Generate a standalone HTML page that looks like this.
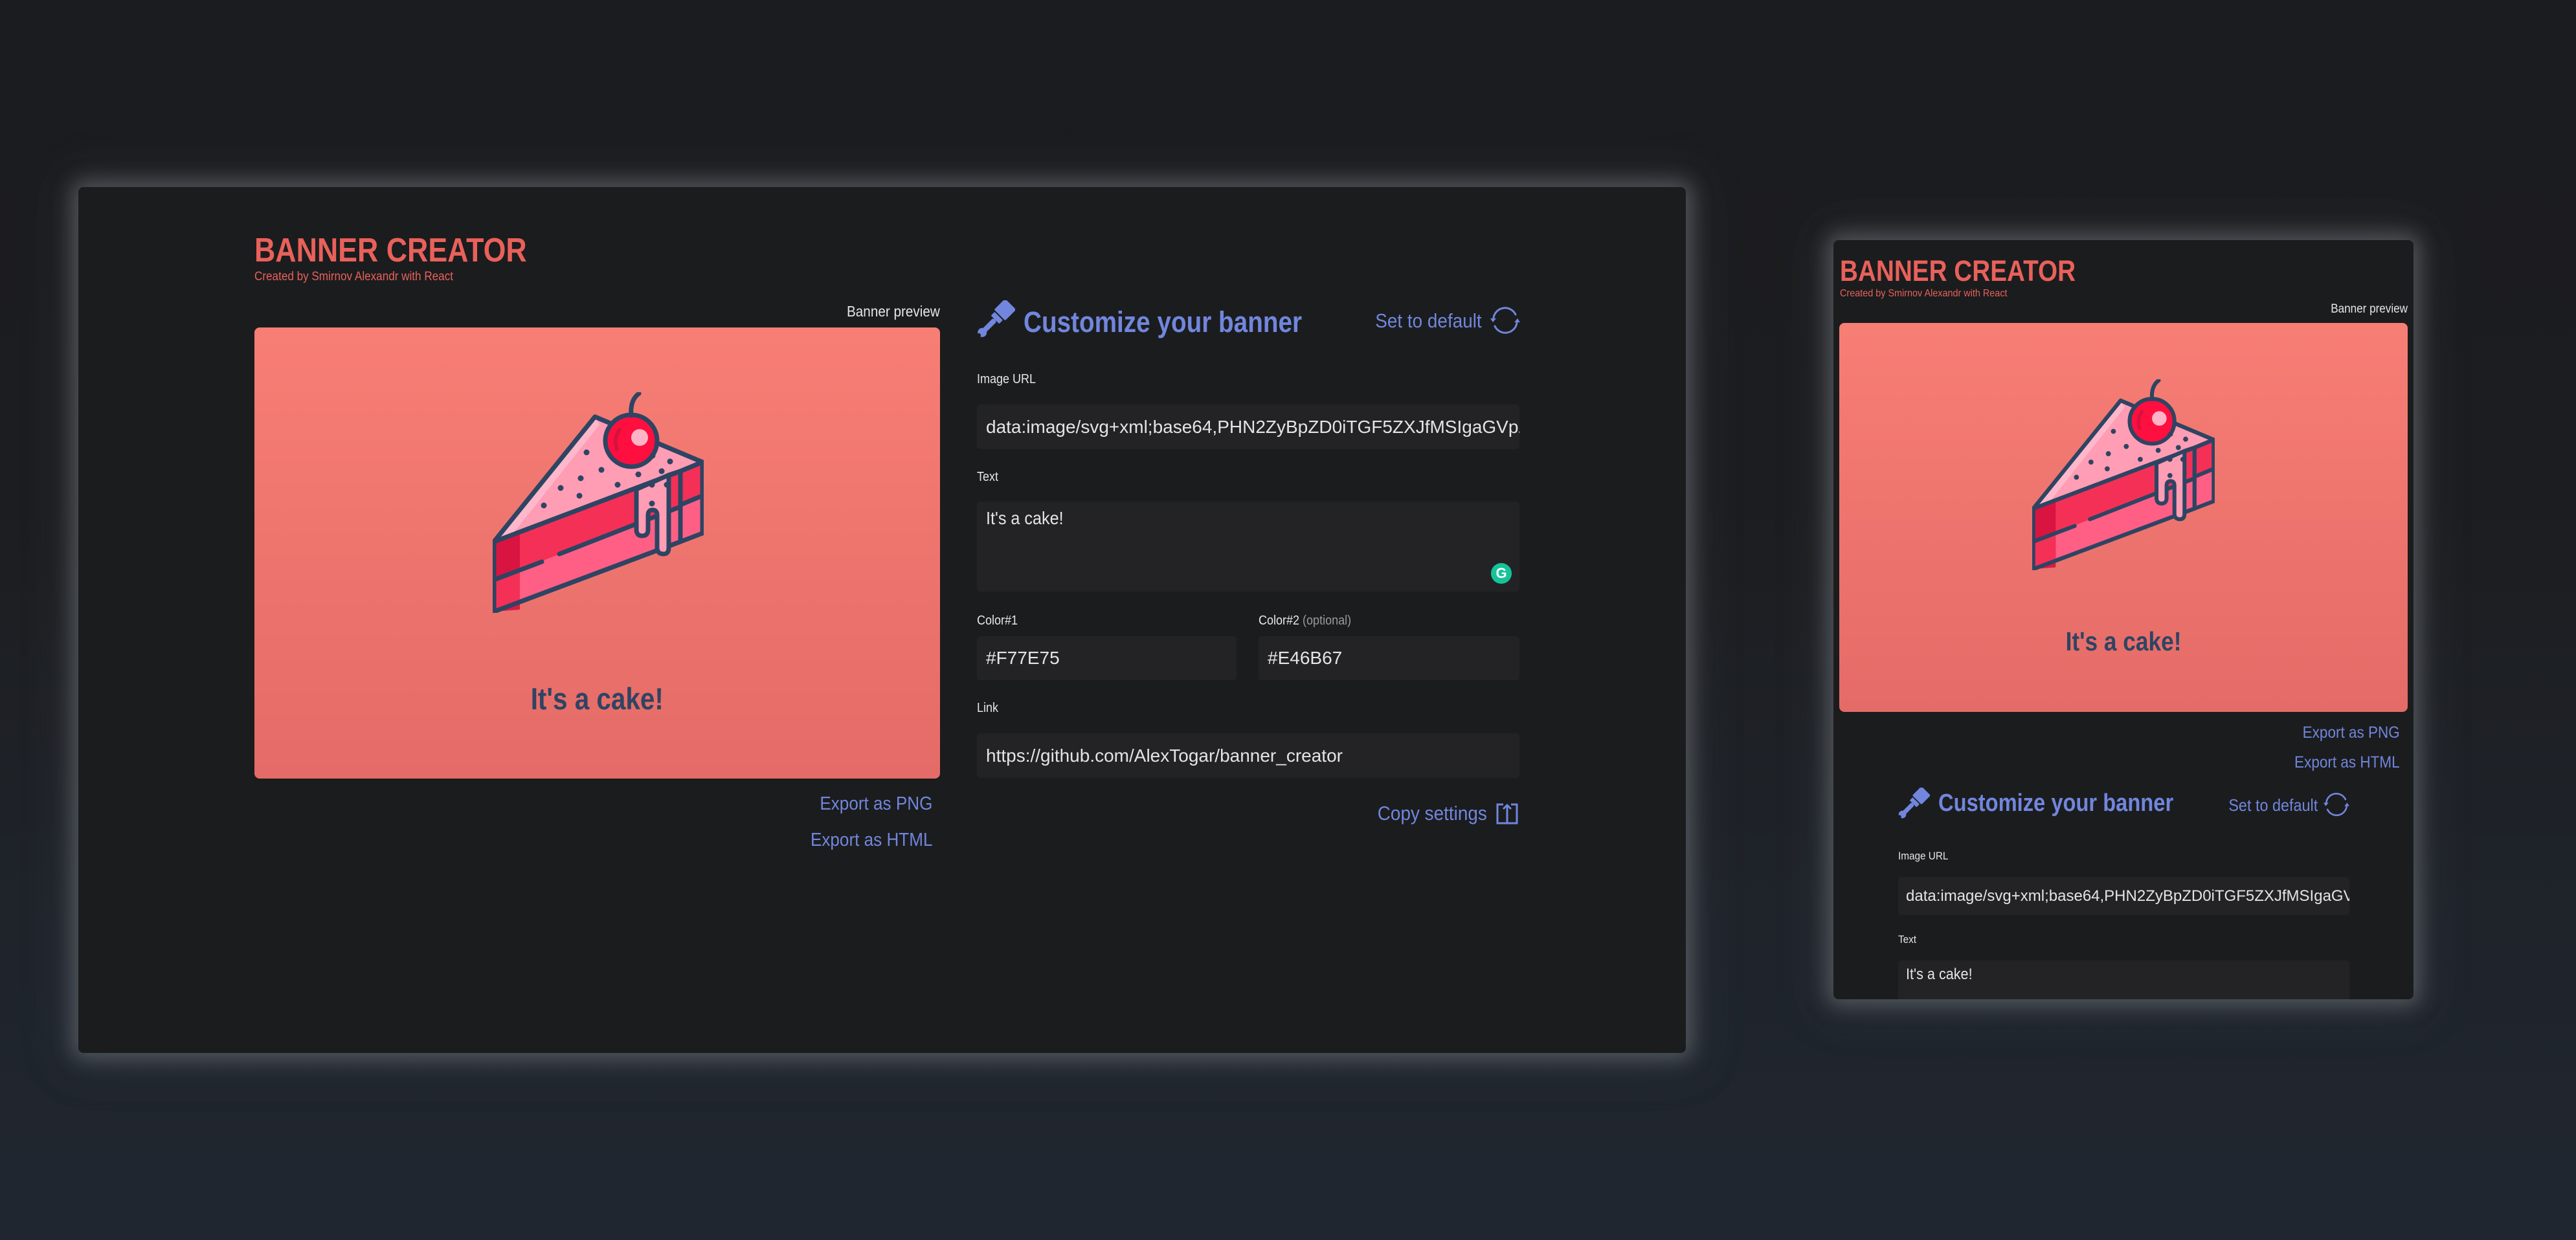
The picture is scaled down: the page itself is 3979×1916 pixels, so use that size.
<!DOCTYPE html>
<html><head><meta charset="utf-8">
<style>
*{margin:0;padding:0;box-sizing:border-box}
html,body{width:3979px;height:1916px;overflow:hidden}
body{background:linear-gradient(180deg,#1b1c1f 0%,#1c1d20 40%,#1f242b 75%,#202630 100%);font-family:"Liberation Sans",sans-serif;position:relative}
.panel{position:absolute;background:#1b1c1e;border-radius:8px;box-shadow:0 0 30px 10px rgba(120,125,132,.5),0 0 70px 20px rgba(90,95,102,.22);overflow:hidden}
.t{position:absolute;white-space:nowrap;line-height:1}
.sx{transform:scaleX(.86);transform-origin:left top}
.sxr{transform:scaleX(.9);transform-origin:right top}
.sxl{transform:scaleX(.9);transform-origin:left top}
.red{color:#e8615a}
.blue{color:#7186dc}
.wh{color:#e6e6e6}
.inp{position:absolute;background:#232326;border-radius:5px;color:#e4e4e4;display:flex;align-items:center;white-space:nowrap;overflow:hidden}
.banner{position:absolute;background:linear-gradient(180deg,#F77E75,#E46B67);border-radius:8px}
.cake-t{color:#2e4463;font-weight:bold;text-align:center;position:absolute;left:0;right:0;line-height:1}
</style></head><body>

<div class="panel" style="left:121px;top:289px;width:2483px;height:1338px"></div>

<div class="t red sx" style="left:393px;top:361px;font-size:52px;font-weight:bold">BANNER CREATOR</div>
<div class="t red sxl" style="left:393px;top:418px;font-size:19px">Created by Smirnov Alexandr with React</div>
<div class="t wh sxr" style="right:2527px;top:470px;font-size:23px">Banner preview</div>

<div class="banner" style="left:393px;top:506px;width:1059px;height:697px">
  <svg style="position:absolute;left:368px;top:100px" width="326" height="341" viewBox="0 0 326 341">
    <g stroke="#2e4463" stroke-width="7" stroke-linejoin="round" stroke-linecap="round">
      <polygon points="2,231 290,122 290,231 2,339" fill="#ff5f85"/>
      <polygon points="2,231 290,122 290,177 2,290" fill="#f43057" stroke="none"/>
      <polygon points="2,231 42,216 42,336 2,339" fill="#d6123f" stroke="none" opacity=".9"/>
      <polygon points="2,290 42,275 42,324 2,339" fill="#f43057" stroke="none"/>
      <polygon points="2,231 290,122 290,231 2,339" fill="none"/>
      <polyline points="2,290 76,262" fill="none"/>
      <polyline points="103,250 290,177" fill="none"/>
      <polygon points="290,122 324,108 324,218 290,231" fill="#ff5f85"/>
      <polygon points="290,122 324,108 324,160 290,174" fill="#f43057"/>
      <polygon points="158,38 2,231 290,122 324,108" fill="#ff9db5"/>
      <polygon points="158,38 2,231 30,220 165,50" fill="#ffb8cb" stroke="none"/>
      <path d="M222,150 L222,212 Q222,222 231,222 Q240,222 240,212 L240,190 Q240,182 247,182 Q254,182 254,190 L254,240 Q254,250 264,250 Q272,250 272,240 L272,128 Z" fill="#ff9db5"/>
      <path d="M2,231 L158,38 L324,108 L290,122 L272,128" fill="none"/>
      <path d="M2,231 L222,148" fill="none"/>
      <circle cx="214" cy="75" r="40" fill="#ff0f40"/>
      <path d="M192,88 Q186,72 196,58" fill="none" stroke="#d6123f" stroke-width="6"/>
      <circle cx="227" cy="70" r="13" fill="#ffb3c6" stroke="none"/>
      <path d="M214,36 Q212,12 226,2" fill="none"/>
    </g>
    <g fill="#2e4463">
      <circle cx="145" cy="93" r="4.5"/><circle cx="168" cy="120" r="4.5"/><circle cx="136" cy="133" r="4.5"/>
      <circle cx="105" cy="148" r="4.5"/><circle cx="134" cy="160" r="4.5"/><circle cx="79" cy="175" r="4.5"/>
      <circle cx="193" cy="143" r="4.5"/><circle cx="225" cy="127" r="4.5"/><circle cx="246" cy="143" r="4.5"/>
      <circle cx="269" cy="143" r="4.5"/><circle cx="261" cy="122" r="4.5"/><circle cx="274" cy="107" r="4.5"/>
      <circle cx="246" cy="172" r="4.5"/><circle cx="247" cy="98" r="4.5"/>
    </g>
  </svg>
  <div class="cake-t" style="top:550px;font-size:47px"><span style="display:inline-block;transform:scaleX(.86)">It's a cake!</span></div>
</div>

<div class="t blue sxr" style="right:2539px;top:1228px;font-size:29px">Export as PNG</div>
<div class="t blue sxr" style="right:2539px;top:1284px;font-size:29px">Export as HTML</div>

<svg style="position:absolute;left:1506px;top:464px" width="62" height="60" viewBox="0 0 62 60">
  <g fill="#7186dc" transform="rotate(45 31 30)">
    <rect x="19" y="-4" width="24" height="24" rx="2"/>
    <rect x="22" y="22" width="18" height="8" rx="1"/>
    <rect x="27" y="30" width="8" height="28" rx="3"/>
    <circle cx="31" cy="58" r="7"/>
  </g>
  <circle cx="6" cy="54" r="3" fill="#1b1c1e"/>
</svg>
<div class="t blue sx" style="left:1581px;top:475px;font-size:45px;font-weight:bold">Customize your banner</div>
<div class="t blue sxr" style="right:1690px;top:480px;font-size:31px">Set to default</div>
<svg style="position:absolute;left:2302px;top:472px" width="46" height="46" viewBox="0 0 46 46">
  <g fill="none" stroke="#7186dc" stroke-width="3" stroke-linecap="round">
    <path d="M5,19 A18,18 0 0 1 39,14"/>
    <path d="M41,27 A18,18 0 0 1 7,32"/>
  </g>
  <path d="M0,20 L9,20 L4,26 Z M46,26 L37,26 L42,20 Z" fill="#7186dc"/>
</svg>

<div class="t wh sxl" style="left:1509px;top:576px;font-size:20px">Image URL</div>
<div class="inp" style="left:1509px;top:625px;width:838px;height:69px;font-size:28px;padding-left:14px">data:image/svg+xml;base64,PHN2ZyBpZD0iTGF5ZXJfMSIgaGVpZ2h0PSI1MTIiIHZpZXdCb3g9</div>
<div class="t wh sxl" style="left:1509px;top:727px;font-size:20px">Text</div>
<div class="inp" style="left:1509px;top:775px;width:838px;height:139px;font-size:28px;padding-left:14px;align-items:flex-start;padding-top:10px"><span style="display:inline-block;transform:scaleX(.9);transform-origin:left">It's a cake!</span></div>
<div style="position:absolute;left:2303px;top:870px;width:32px;height:32px;border-radius:50%;background:#15c39a;color:#fff;font-weight:bold;font-size:22px;line-height:32px;text-align:center">G</div>
<div class="t wh sxl" style="left:1509px;top:949px;font-size:20px">Color#1</div>
<div class="t wh sxl" style="left:1944px;top:949px;font-size:20px">Color#2 <span style="color:#9a9a9a">(optional)</span></div>
<div class="inp" style="left:1509px;top:983px;width:401px;height:68px;font-size:28px;padding-left:14px">#F77E75</div>
<div class="inp" style="left:1944px;top:983px;width:403px;height:68px;font-size:28px;padding-left:14px">#E46B67</div>
<div class="t wh sxl" style="left:1509px;top:1084px;font-size:20px">Link</div>
<div class="inp" style="left:1509px;top:1133px;width:838px;height:69px;font-size:28px;padding-left:14px">https://github.com/AlexTogar/banner_creator</div>
<div class="t blue sxr" style="right:1682px;top:1241px;font-size:31px">Copy settings</div>
<svg style="position:absolute;left:2310px;top:1240px" width="36" height="35" viewBox="0 0 36 35">
  <g fill="none" stroke="#7186dc" stroke-width="3">
    <path d="M12,3 H3 V32 H33 V3 H24"/>
    <path d="M18,32 V4 M12,10 L18,4 L24,10"/>
  </g>
</svg>

<div class="panel" style="left:2832px;top:371px;width:896px;height:1173px">
  <div class="t red sx" style="left:10px;top:25px;font-size:45px;font-weight:bold">BANNER CREATOR</div>
  <div class="t red sxl" style="left:10px;top:75px;font-size:16px">Created by Smirnov Alexandr with React</div>
  <div class="t wh sxr" style="right:9px;top:97px;font-size:19px">Banner preview</div>
  <div class="banner" style="left:9px;top:128px;width:878px;height:601px">
    <svg style="position:absolute;left:298px;top:87px" width="282" height="295" viewBox="0 0 326 341">
      <g stroke="#2e4463" stroke-width="7" stroke-linejoin="round" stroke-linecap="round">
        <polygon points="2,231 290,122 290,231 2,339" fill="#ff5f85"/>
        <polygon points="2,231 290,122 290,177 2,290" fill="#f43057" stroke="none"/>
        <polygon points="2,231 42,216 42,336 2,339" fill="#d6123f" stroke="none" opacity=".9"/>
        <polygon points="2,290 42,275 42,324 2,339" fill="#f43057" stroke="none"/>
        <polygon points="2,231 290,122 290,231 2,339" fill="none"/>
        <polyline points="2,290 76,262" fill="none"/>
        <polyline points="103,250 290,177" fill="none"/>
        <polygon points="290,122 324,108 324,218 290,231" fill="#ff5f85"/>
        <polygon points="290,122 324,108 324,160 290,174" fill="#f43057"/>
        <polygon points="158,38 2,231 290,122 324,108" fill="#ff9db5"/>
        <polygon points="158,38 2,231 30,220 165,50" fill="#ffb8cb" stroke="none"/>
        <path d="M222,150 L222,212 Q222,222 231,222 Q240,222 240,212 L240,190 Q240,182 247,182 Q254,182 254,190 L254,240 Q254,250 264,250 Q272,250 272,240 L272,128 Z" fill="#ff9db5"/>
        <path d="M2,231 L158,38 L324,108 L290,122 L272,128" fill="none"/>
        <path d="M2,231 L222,148" fill="none"/>
        <circle cx="214" cy="75" r="40" fill="#ff0f40"/>
        <path d="M192,88 Q186,72 196,58" fill="none" stroke="#d6123f" stroke-width="6"/>
        <circle cx="227" cy="70" r="13" fill="#ffb3c6" stroke="none"/>
        <path d="M214,36 Q212,12 226,2" fill="none"/>
      </g>
      <g fill="#2e4463">
        <circle cx="145" cy="93" r="4.5"/><circle cx="168" cy="120" r="4.5"/><circle cx="136" cy="133" r="4.5"/>
        <circle cx="105" cy="148" r="4.5"/><circle cx="134" cy="160" r="4.5"/><circle cx="79" cy="175" r="4.5"/>
        <circle cx="193" cy="143" r="4.5"/><circle cx="225" cy="127" r="4.5"/><circle cx="246" cy="143" r="4.5"/>
        <circle cx="269" cy="143" r="4.5"/><circle cx="261" cy="122" r="4.5"/><circle cx="274" cy="107" r="4.5"/>
        <circle cx="246" cy="172" r="4.5"/><circle cx="247" cy="98" r="4.5"/>
      </g>
    </svg>
    <div class="cake-t" style="top:472px;font-size:41px"><span style="display:inline-block;transform:scaleX(.86)">It's a cake!</span></div>
  </div>
  <div class="t blue sxr" style="right:21px;top:749px;font-size:25px">Export as PNG</div>
  <div class="t blue sxr" style="right:21px;top:795px;font-size:25px">Export as HTML</div>
  <svg style="position:absolute;left:97px;top:846px" width="52" height="50" viewBox="0 0 62 60">
    <g fill="#7186dc" transform="rotate(45 31 30)">
      <rect x="19" y="-4" width="24" height="24" rx="2"/>
      <rect x="22" y="22" width="18" height="8" rx="1"/>
      <rect x="27" y="30" width="8" height="28" rx="3"/>
      <circle cx="31" cy="58" r="7"/>
    </g>
    <circle cx="6" cy="54" r="3" fill="#1b1c1e"/>
  </svg>
  <div class="t blue sx" style="left:162px;top:851px;font-size:38px;font-weight:bold">Customize your banner</div>
  <div class="t blue sxr" style="right:148px;top:860px;font-size:26px">Set to default</div>
  <svg style="position:absolute;left:757px;top:852px" width="40" height="40" viewBox="0 0 46 46">
    <g fill="none" stroke="#7186dc" stroke-width="3" stroke-linecap="round">
      <path d="M5,19 A18,18 0 0 1 39,14"/>
      <path d="M41,27 A18,18 0 0 1 7,32"/>
    </g>
    <path d="M0,20 L9,20 L4,26 Z M46,26 L37,26 L42,20 Z" fill="#7186dc"/>
  </svg>
  <div class="t wh sxl" style="left:100px;top:943px;font-size:17px">Image URL</div>
  <div class="inp" style="left:100px;top:984px;width:697px;height:59px;font-size:24px;padding-left:12px">data:image/svg+xml;base64,PHN2ZyBpZD0iTGF5ZXJfMSIgaGVpZ2h0PSI1MTIi</div>
  <div class="t wh sxl" style="left:100px;top:1072px;font-size:17px">Text</div>
  <div class="inp" style="left:100px;top:1113px;width:697px;height:120px;font-size:24px;padding-left:12px;align-items:flex-start;padding-top:8px"><span style="display:inline-block;transform:scaleX(.9);transform-origin:left">It's a cake!</span></div>
</div>

</body></html>
